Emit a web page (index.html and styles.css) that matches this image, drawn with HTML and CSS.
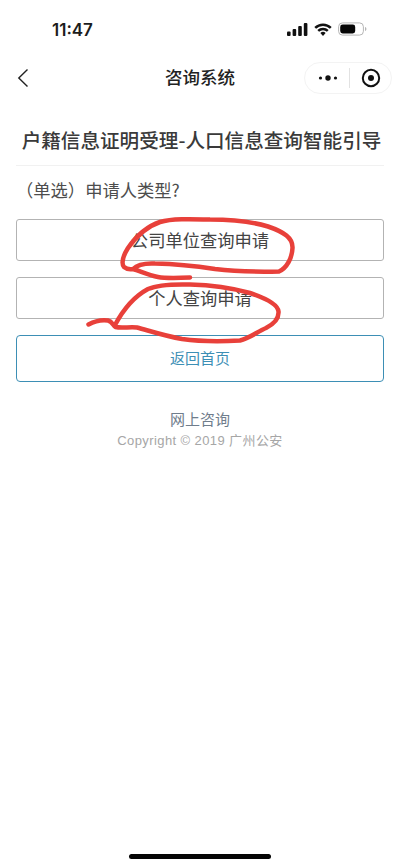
FILE: index.html
```html
<!DOCTYPE html>
<html lang="zh-CN">
<head>
<meta charset="utf-8">
<title>咨询系统</title>
<link rel="stylesheet" href="styles.css">
</head>
<body>
<div class="screen">
  <div class="status">
    <span class="time">11:47</span>
    <div class="status-icons">
      <svg class="signal" width="21" height="13" viewBox="0 0 21 13"><rect x="0" y="8.500" width="3.600" height="4.500" rx="1"/><rect x="5.600" y="6" width="3.600" height="7" rx="1"/><rect x="11.200" y="3" width="3.600" height="10" rx="1"/><rect x="16.800" y="0" width="3.600" height="13" rx="1"/></svg>
      <svg class="wifi" width="18" height="13" viewBox="0 0 18 13"><path d="M1.200 4.800a11.200 11.200 0 0 1 15.600 0" fill="none" stroke="#111" stroke-width="2.500"/><path d="M4.200 7.800a7 7 0 0 1 9.600 0" fill="none" stroke="#111" stroke-width="2.500"/><path d="M6.400 10a3.700 3.700 0 0 1 5.200 0L9 13z" fill="#111"/></svg>
      <svg class="battery" width="29" height="14" viewBox="0 0 29 14"><rect x="0.600" y="0.900" width="24.800" height="12.200" rx="3.800" fill="none" stroke="#b5b5b5" stroke-width="1"/><rect x="2.200" y="2.500" width="15" height="9" rx="2.400" fill="#050505"/><path d="M27 5v4c.9-.4 1.400-1.100 1.400-2s-.5-1.600-1.400-2z" fill="#b5b5b5"/></svg>
    </div>
  </div>

  <div class="nav">
    <svg class="back" width="12" height="20" viewBox="0 0 12 20"><path d="M10.500 1.500 1.800 10l8.700 8.500" fill="none" stroke="#222" stroke-width="1.400"/></svg>
    <h1 class="nav-title">咨询系统</h1>
    <div class="capsule">
      <svg class="dots" width="20" height="8" viewBox="0 0 20 8"><circle cx="2.500" cy="4" r="1.600"/><circle cx="10" cy="4" r="2.700"/><circle cx="17.500" cy="4" r="1.600"/></svg>
      <span class="capsule-line"></span>
      <svg class="target" width="20" height="20" viewBox="0 0 20 20"><circle cx="10" cy="10" r="8.200" fill="none" stroke="#111" stroke-width="2"/><circle cx="10" cy="10" r="3" fill="#111"/></svg>
    </div>
  </div>

  <main class="content">
    <h2 class="page-title">户籍信息证明受理-人口信息查询智能引导</h2>
    <p class="question">（单选）申请人类型?</p>
    <div class="option">公司单位查询申请</div>
    <div class="option">个人查询申请</div>
    <div class="option option-home">返回首页</div>
    <footer class="foot">
      <div class="foot-link">网上咨询</div>
      <div class="foot-copy">Copyright © 2019 广州公安</div>
    </footer>
  </main>

  <svg class="scribble" width="400" height="867" viewBox="0 0 400 867">
    <path d="M190 277.500C178 278 166 278.500 158 277C148 275 140 271 133 269C137 265 145 263 155 263.500C175 264 195 266 215 269C235 271.500 258 272 279 271.500C287 268 292 258 292.500 248C293 238 284 232 268 226.500C250 221 230 219.500 210 219.500C190 219 172 218.500 160 222C145 227 135 238 128 248C123 256 121 263 124 267C127 269.500 130 269.500 133 269"/>
    <path d="M88.500 324.500C94 321.500 101 319.500 108 320.500C112 321.500 113 325 115.500 327C122 328.500 130 326.500 137 327.500C150 331 165 336 182 339C200 341.500 222 341.500 240 340.500C250 338 257 332 266 328C274 324 279 318 278.500 311.500C278 305 268 299 250 293C232 288 212 285 190 284.500C172 284 158 284.500 148 289C135 296 123 310 115 325"/>
  </svg>

  <div class="home-bar"></div>
</div>
</body>
</html>
```
FILE: styles.css
```css
* { box-sizing: border-box; }
html, body { margin: 0; padding: 0; background: #fff; }
body { font-family: "Noto Sans CJK SC", "Noto Sans", sans-serif; }
.screen { position: relative; width: 400px; height: 867px; overflow: hidden; background: #fff; }

.status { height: 60px; padding: 19px 0 0 52px; display: flex; justify-content: space-between; align-items: flex-start; }
.time { font-family: Inter, "Liberation Sans", sans-serif; font-size: 17px; font-weight: 600; line-height: 22px; color: #1c1c1c; }
.status-icons { display: flex; align-items: center; gap: 6px; padding: 3px 33px 0 0; }
.signal { fill: #111; }

.nav { height: 36px; display: flex; align-items: center; position: relative; padding: 0 8px 0 17px; justify-content: space-between; }
.nav-title { position: absolute; left: 0; right: 0; top: 4px; margin: 0; text-align: center; font-size: 17.500px; line-height: 26px; font-weight: 500; color: #222; }
.capsule { display: flex; align-items: center; width: 88px; height: 32px; border: 1px solid #f3f3f3; border-radius: 16px; padding: 0 10px 0 13px; justify-content: space-between; background: #fff; position: relative; }
.dots { fill: #111; }
.capsule-line { width: 1px; height: 20px; background: #e2e2e2; }

.content { padding: 0 16px; }
.page-title { margin: 0; padding: 30px 0 11px 3px; height: 70px; border-bottom: 1px solid #f1f1f1; text-align: center; font-size: 19.600px; line-height: 28px; font-weight: 500; color: #3a3a3a; white-space: nowrap; }
.question { margin: 0; padding: 12px 0 0; height: 53px; font-size: 17.300px; line-height: 24px; color: #4d4d4d; white-space: nowrap; }
.option { height: 42px; margin-bottom: 16px; padding-bottom: 2px; border: 1px solid #b3b3b3; border-radius: 3px; display: flex; align-items: center; justify-content: center; font-size: 17.300px; color: #444; }
.option-home { height: 47px; border-color: #3d8fb5; border-radius: 4px; font-size: 15px; color: #3d8fb5; margin-bottom: 0; padding-bottom: 3px; }

.foot { text-align: center; padding-top: 27px; }
.foot-link { font-size: 15px; line-height: 20px; color: #6f7d8c; }
.foot-copy { font-family: "Liberation Sans", "Noto Sans CJK SC", sans-serif; font-size: 13px; line-height: 21px; padding-top: 1px; color: #a6a6a6; letter-spacing: .4px; }

.scribble { position: absolute; left: 0; top: 0; fill: none; stroke: #e8403a; stroke-width: 4.500; stroke-linecap: round; stroke-linejoin: round; pointer-events: none; }
.home-bar { position: absolute; left: 129px; bottom: 8px; width: 142px; height: 5px; border-radius: 3px; background: #050505; }
```
